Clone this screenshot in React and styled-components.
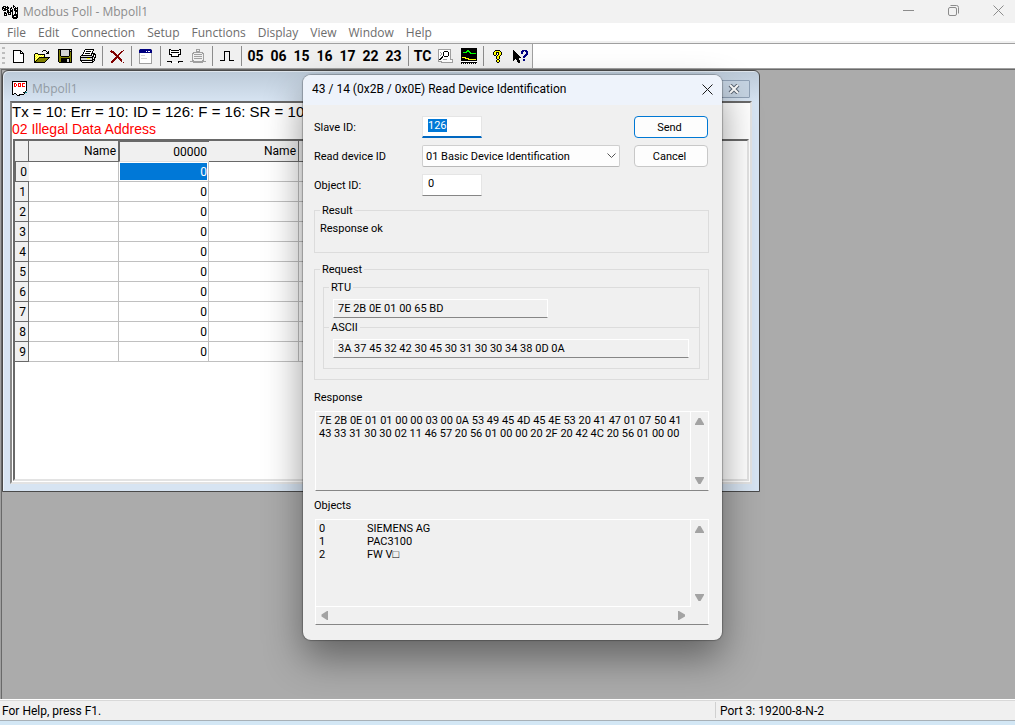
import React, { useEffect, useRef } from "react";
import styled, { createGlobalStyle } from "styled-components";

const uiFont = `"Open Sans", "Noto Sans", sans-serif`;
const dialogFont = `Roboto, "Noto Sans", sans-serif`;

const GlobalStyle = createGlobalStyle`
  * {
    box-sizing: border-box;
  }
  body {
    margin: 0;
    font-family: ${uiFont};
    font-size: 12px;
    color: #000;
    overflow: hidden;
  }
  button,
  input,
  select,
  textarea {
    font: inherit;
    color: inherit;
    margin: 0;
    border-radius: 0;
    outline: none;
  }
`;

/* ---------- pixel icons ---------- */

const palette = {
  k: "#000000",
  w: "#ffffff",
  y: "#ffff00",
  c: "#ffff9c",
  o: "#808000",
  r: "#800000",
  R: "#ff0000",
  n: "#000080",
  g: "#a0a0a0",
  d: "#707070",
  l: "#d4d4d4",
  G: "#00ff00",
  t: "#008080",
};

const icons = {
  app: [
    "...........k....",
    ".kkk.k.....kk...",
    "kkwkkkk..k.kwk.k",
    "kkkkwkk.kk..kkkk",
    "kwkkkk..kwk.kk.k",
    ".kkk.kk.kkk.kkkk",
    ".....kk.kkk..kkk",
    "..kk.kkkk.k..k.k",
    "..kkk.kwk.k..k.k",
    "..kwk.kkk.k.kkkk",
    "..kkk.....kkkkkk",
    "..........kkwwkk",
    "..........kkkkkk",
    "...........kkkk.",
  ],
  doc: [
    "kkkkkkkkkkkkkkk",
    "kwwwwwwwwwwwwwk",
    "kwRRwwRRRwRRRwk",
    "kwRwRwRwRwRwwwk",
    "kwRwRwRwRwRwwwk",
    "kwRRwwRRRwRRRwk",
    "kwwwwwwwwwwwwwk",
    "kwwwwwwwwwwwwwk",
    "kwwwwwwwwwwwwwk",
    "kwwwwwwwwwwwwwk",
    "kwwwwwwwwwwwwk.",
    "kwwwwwwwwwwkktt",
    "kwkkwwwwwwwwk..",
    "kk..kwwkkkkk...",
    ".....kkk.......",
  ],
  new: [
    "kkkkkkkk...",
    "kwwwwwwkk..",
    "kwwwwwwkwk.",
    "kwwwwwwkkkk",
    "kwwwwwwwwwk",
    "kwwwwwwwwwk",
    "kwwwwwwwwwk",
    "kwwwwwwwwwk",
    "kwwwwwwwwwk",
    "kwwwwwwwwwk",
    "kwwwwwwwwwk",
    "kwwwwwwwwwk",
    "kkkkkkkkkkk",
  ],
  open: [
    ".........kkk....",
    "........k...k.k.",
    ".............kk.",
    ".kkk........kkk.",
    "kycykkkkkkk.....",
    "kcycycycyck.....",
    "kycycycycyk.....",
    "kcycykkkkkkkkkkk",
    "kycykoooooooook.",
    "kcykoooooooook..",
    "kykoooooooook...",
    "kkoooooooook....",
    "kkkkkkkkkkk.....",
  ],
  save: [
    "kkkkkkkkkkkkkk",
    "kokllllllllklk",
    "kokllllllllkkk",
    "kokllllllllkok",
    "kokllllllllkok",
    "kokllllllllkok",
    "kokllllllllkok",
    "kookkkkkkkkook",
    "kooooooooooook",
    "kookkkkkkkkkok",
    "kookkkkkkllkok",
    "kookkkkkkllkok",
    "kookkkkkkllkok",
    ".kkkkkkkkkkkkk",
  ],
  print: [
    ".....kkkkkkkkk..",
    "....kwwwwwwwwk..",
    "....kwkkkkkwk...",
    "...kwwwwwwwwk...",
    "...kwkkkkkwkkkk.",
    "..kwwwwwwwwk.kkk",
    ".kkkkkkkkkkk.kwk",
    "klllllllllllkkwk",
    "kkkkkkkkkkkkklkk",
    "kllllllyyyllkwk.",
    "klllllllllllkkk.",
    "kkkkkkkkkkkkklk.",
    ".kwwwwwwwwwwkk..",
    "..kkkkkkkkkkk...",
  ],
  remove: [
    ".r...........r",
    "rrrr.......rr.",
    ".rrrr.....rr..",
    "...rrr...rr...",
    "....rrr.rr....",
    ".....rrrr.....",
    "......rrr.....",
    ".....rrrrr....",
    "....rrr.rrr...",
    "...rrr...rrr..",
    "..rrr.....rr..",
    ".rrr.......r..",
    ".rr..........r",
  ],
  window: [
    "gnnnnnnnnnnng",
    "nnnnnnnnnnnnn",
    "nnnnnnnwnwwnn",
    "nnnnnnnnnnnnn",
    "gwwwwwwwwwwwg",
    "gwwwwwwwwwwwg",
    "gwllllwwwwwwg",
    "gwwwwwwwwwwwg",
    "gwwwwwwwwwwwg",
    "gwllllllwwwwg",
    "gwwwwwwwwwwwg",
    "gwwwwwwwwwwwg",
    "gwwwwwwwwwwwg",
    "gwwwwwwwwwwwg",
    "ggggggggggggg",
  ],
  read: [
    "..kk........kk..",
    "..kwkkkkkkkkwk..",
    "..kwwwwwwwwwwk..",
    "..kwkkkkkkkkwk..",
    "..kwwwwwwwwwwk..",
    "..kkkwwwwwwkkk..",
    "....kwwwwwwk....",
    "....kkkkkkkk....",
    "................",
    "................",
    "................",
    "................",
    "kkkkk......kkkkk",
    "....kwwwwwwk....",
  ],
  write: [
    "......gggg......",
    "......g..g......",
    "......gggg......",
    "...gggggggggg...",
    "..gg........gg..",
    "..g.gggggggg.g..",
    "..g..........g..",
    "..g.gggggggg.g..",
    "..g..........g..",
    "..g.gggggggg.g..",
    "..g..........g..",
    "..gg........gg..",
    "gggggggggggggggg",
    "...gggggggggg...",
  ],
  log: [
    "ggggggggggggg..",
    "gwwwwwwwwwwwg..",
    "gwwwwwkkkkwwg..",
    "gwgwwkwwwwkwg..",
    "gwwgwkwwwwkwg..",
    "gwwgwkwwwwkwg..",
    "gwgwwkwwwwkwg..",
    "gwwwkwkkkkwwg..",
    "gwwkkwwwwwwwg..",
    "gwkkwwwwwwwwg..",
    "gkkwwggggwwwggg",
    "gwwwwwwwwwwwwwg",
    "ggggwwwwwwwwwwg",
    "...gggggggggggg",
  ],
  chart: [
    "kkkkkkkkkkkkkkkk",
    "kkkkkkkkkkkkkkkk",
    "kkkkkkGGkkkkkkkk",
    "kkkkkGGGGkkkkkkk",
    "kkGGGGkkGGkkkkkk",
    "kkkkkkkkkGGGGGGk",
    "kkkkkkkkkkkkkkkk",
    "kkkkkkkkkkkkkkkk",
    "kkkkkkkkkkkkkkkk",
    "kyyyykkkkkkkkkkk",
    "kkkkyyyykkkkkkkk",
    "kkkkkkkyyyyyyyyk",
    "kkkkkkkkkkkkkkkk",
    "wwwwwwwwwwwwwwww",
    "kkkkkkkkkkkkkkkk",
    "kwkwkwkwkwkwkwkw",
  ],
  help: [
    "..kkkkk..",
    ".kyyyyyk.",
    "kyykkkyyk",
    "kyyk.kyyk",
    "kyyk.kyyk",
    ".kk.kyyk.",
    "...kyyk..",
    "...kyyk..",
    "...kyyk..",
    "....kk...",
    "...kyyk..",
    "...kyyk..",
    "....kk...",
  ],
  context: [
    "k........nnnnn..",
    "kk......nnn.nnn.",
    "kkk.....nn...nn.",
    "kkkk....nn...nn.",
    "kkkkk.......nnn.",
    "kkkkkk.....nnn..",
    "kkkkkkk...nnn...",
    "kkkkkkkk..nn....",
    "kkkkkk..........",
    "kk.kkk....nn....",
    "k...kkk...nn....",
    "....kkk.........",
    ".....kk.........",
  ],
};

const PixelIcon = ({ name }) => {
  const rows = icons[name];
  const width = rows[0].length;

  return (
    <svg
      width={width}
      height={rows.length}
      viewBox={`0 0 ${width} ${rows.length}`}
      shapeRendering="crispEdges"
      aria-hidden="true"
    >
      {rows.map((row, y) =>
        row
          .split("")
          .map((c, x) =>
            palette[c] ? (
              <rect
                key={`${x}-${y}`}
                x={x}
                y={y}
                width="1"
                height="1"
                fill={palette[c]}
              />
            ) : null
          )
      )}
    </svg>
  );
};

/* ---------- main window ---------- */

const Page = styled.div`
  display: flex;
  flex-direction: column;
  height: 100vh;
  position: relative;
  background: #f0f0f0;
`;

const TitleBar = styled.header`
  display: flex;
  align-items: center;
  height: 23px;
  padding: 0 11px 0 2px;
  gap: 5px;
  background: #f2f2f2;
  color: #8c8c8c;
`;

const AppTitle = styled.h1`
  flex: 1;
  margin: 0;
  font-size: 12px;
  font-weight: normal;
`;

const WindowControls = styled.div`
  display: flex;
  gap: 34px;
  padding-bottom: 2px;
`;

const GlyphButton = styled.button`
  display: flex;
  padding: 0;
  border: 0;
  background: none;
`;

const MenuBar = styled.nav`
  display: flex;
  align-items: center;
  gap: 12px;
  height: 18px;
  padding: 1px 7px 0;
  background: #fff;

  a {
    color: #6d6d6d;
    text-decoration: none;
  }
`;

const ToolbarRow = styled.div`
  display: flex;
  height: 27px;
  background: #fff;
  border-top: 2px solid #f0f0f0;
`;

const Toolbar = styled.div`
  display: flex;
  align-items: center;
  background: #f0f0f0;
  border-top: 1px solid #a0a0a0;
  border-right: 1px solid #a0a0a0;
`;

const ToolbarRest = styled.div`
  flex: 1;
  border-top: 1px solid #a0a0a0;
`;

const Grip = styled.span`
  width: 3px;
  height: 19px;
  margin: 0 2px;
  background: repeating-linear-gradient(#bdbdbd 0 2px, #f0f0f0 2px 5px);
`;

const ToolButton = styled.button`
  display: flex;
  align-items: center;
  justify-content: center;
  width: 23px;
  height: 22px;
  padding: 0;
  border: 0;
  background: none;
  font-family: ${dialogFont};
  font-size: 14px;
  font-weight: bold;
`;

const Separator = styled.span`
  width: 1px;
  height: 20px;
  margin: 0 2px 0 3px;
  background: #8c8c8c;
`;

const Workspace = styled.main`
  flex: 1;
  position: relative;
  overflow: hidden;
  background: #ababab;
  border-top: 1px solid #a0a0a0;
  border-left: 1px solid #a0a0a0;
  box-shadow: inset 1px 1px #696969;
`;

const StatusBar = styled.footer`
  display: flex;
  align-items: center;
  height: 22px;
  border-top: 1px solid #fff;
  border-bottom: 1px solid #a8b0b6;
  box-shadow: inset 0 1px #d9d9d9;
  font-family: ${dialogFont};
`;

const StatusText = styled.span`
  flex: 1;
  padding: 2px 0 0 2px;
`;

const PortText = styled.span`
  width: 300px;
  padding: 2px 0 0 4px;
  border-left: 1px solid #d0d0d0;
`;

const DesktopEdge = styled.div`
  height: 4px;
  background: #d3e7f5;
`;

/* ---------- poll window ---------- */

const PollWindow = styled.section`
  position: absolute;
  left: 1px;
  top: 1px;
  width: 758px;
  height: 422px;
  display: flex;
  flex-direction: column;
  padding: 0 7px 7px;
  border: 1px solid #4a4a4a;
  border-radius: 6px 6px 0 0;
  background: linear-gradient(#bccad8, #d7e4f2 31px);
  box-shadow: inset 1px 1px rgba(255, 255, 255, 0.5);
`;

const PollTitle = styled.div`
  display: flex;
  align-items: center;
  gap: 5px;
  height: 30px;
  padding: 5px 2px 0;
  color: #929ba4;
`;

const PollName = styled.h2`
  flex: 1;
  margin: 0;
  font-size: 12px;
  font-weight: normal;
`;

const PollClose = styled.button`
  display: flex;
  align-items: center;
  justify-content: center;
  width: 32px;
  height: 18px;
  padding: 0;
  border: 1px solid #8fa0b5;
  border-radius: 1px;
  background: #c5d3e2;
`;

const Client = styled.div`
  flex: 1;
  display: flex;
  flex-direction: column;
  padding: 0 1px 1px;
  min-height: 0;
  border: 2px solid;
  border-color: #696969 #e3e3e3 #e3e3e3 #8a8a8a;
  background: #fff;
`;

const PollStatus = styled.p`
  margin: 0 0 0 -1px;
  height: 36px;
  font-family: "Liberation Sans", Arial, sans-serif;
  font-size: 15px;
  line-height: 17px;
  white-space: nowrap;
`;

const PollError = styled.span`
  display: block;
  font-size: 14px;
  line-height: 18px;
  color: #f00;
`;

const GridFrame = styled.div`
  flex: 1;
  border: 2px solid;
  border-color: #696969 #e3e3e3 #e3e3e3 #696969;
`;

const Grid = styled.table`
  table-layout: fixed;
  width: 374px;
  border-collapse: separate;
  border-spacing: 0;
  text-align: right;
  font-family: ${dialogFont};
`;

const HeadCell = styled.th`
  width: ${(props) => (props.$narrow ? "14px" : "90px")};
  height: 21px;
  padding: 0 2px 0 0;
  font-weight: normal;
  line-height: 18px;
  background: #f0f0f0;
  border: solid #696969;
  border-width: ${(props) => (props.$current ? "1px 0 1px 1px" : "0 1px 1px 0")};
  border-bottom-color: ${(props) => (props.$current ? "#e0e0e0" : "#696969")};
`;

const RowCell = styled.th`
  height: 20px;
  padding: 1px 2px 0 0;
  font-weight: normal;
  line-height: 18px;
  background: #f0f0f0;
  border: solid #696969;
  border-width: ${(props) => (props.$current ? "0 0 1px 1px" : "0 1px 1px 0")};
`;

const Cell = styled.td`
  height: 20px;
  padding: 1px;
  border: solid #c0c0c0;
  border-width: 0 1px 1px 0;
`;

const CellValue = styled.div`
  height: 17px;
  line-height: 18px;
  background: ${(props) => (props.$current ? "#0078d7" : "#fff")};
  color: ${(props) => (props.$current ? "#fff" : "#000")};
`;

/* ---------- dialog ---------- */

const Dialog = styled.form`
  position: absolute;
  left: 303px;
  top: 75px;
  width: 419px;
  border-radius: 8px;
  background: #f0f0f0;
  box-shadow: 0 0 1px 1px rgba(0, 0, 0, 0.25), 0 18px 38px rgba(0, 0, 0, 0.42);
  font-family: ${dialogFont};
  font-size: 11px;
  line-height: 13px;
`;

const DialogTitle = styled.div`
  display: flex;
  align-items: center;
  justify-content: space-between;
  height: 30px;
  padding: 0 9px 2px;
  border-radius: 8px 8px 0 0;
  background: #eef3fb;

  h2 {
    margin: 0;
    font-size: 12px;
    font-weight: normal;
  }
`;

const DialogBody = styled.div`
  display: flex;
  flex-direction: column;
  padding: 11px 13px 15px 11px;
`;

const Settings = styled.div`
  display: flex;
  justify-content: space-between;
`;

const Fields = styled.div`
  display: grid;
  grid-template-columns: 108px 198px;
  row-gap: 7px;
  align-items: center;
`;

const Actions = styled.div`
  display: flex;
  flex-direction: column;
  gap: 7px;
  padding-right: 1px;
`;

const DialogButton = styled.button`
  width: 74px;
  height: 22px;
  padding: 0 3px 0 0;
  border: 1px solid ${(props) => (props.$primary ? "#0078d4" : "#c8c8c8")};
  border-radius: 4px;
  background: #fdfdfd;
`;

const NumberInput = styled.input`
  width: 60px;
  height: 22px;
  padding: 0 5px 3px;
  border: 1px solid #e5e5e5;
  border-bottom: 1px solid #868686;
  background: #fff;

  &:focus {
    border-bottom: 2px solid #0067c0;
    padding-bottom: 2px;
  }

  &::selection {
    background: #0078d7;
    color: #fff;
  }
`;

const SelectWrap = styled.div`
  position: relative;

  svg {
    position: absolute;
    right: 4px;
    top: 8px;
    pointer-events: none;
  }
`;

const Select = styled.select`
  display: block;
  appearance: none;
  width: 100%;
  height: 22px;
  padding: 1px 3px 0;
  border: 1px solid #cfcfcf;
  border-bottom-color: #b8b8b8;
  border-radius: 2px;
  background: #fdfdfd;
`;

const Sections = styled.div`
  display: flex;
  flex-direction: column;
  padding-top: 8px;
  gap: 10px;
`;

/* $inset is the side padding, the legend always starts 6px from the frame */
const Group = styled.fieldset`
  min-width: 0;
  margin: 0;
  padding: 5px ${(props) => props.$inset}px 10px;
  border: 1px solid #dcdcdc;

  legend {
    margin-left: ${(props) => 5 - props.$inset}px;
    padding: 0 2px;
  }
`;

/* the frame below supplies the bottom line */
const OpenGroup = styled(Group)`
  margin-bottom: -7px;
  border-bottom: 0;
`;

const ResultText = styled.output`
  display: block;
  height: 20px;
`;

const CodeInput = styled.input`
  display: block;
  width: ${(props) => props.$width};
  height: 19px;
  padding: 0 4px;
  border: 1px solid #fff;
  border-bottom-color: #868686;
  background: #f0f0f0;
`;

const Areas = styled.div`
  display: flex;
  flex-direction: column;
  gap: 7px;
`;

const AreaLabel = styled.label`
  display: block;
  padding: 1px 0 7px;
`;

const AreaFrame = styled.div`
  display: grid;
  grid-template-columns: 1fr 17px;
  border: 1px solid #fff;
  border-bottom-color: #868686;
  margin-left: 1px;
`;

const Area = styled.textarea`
  display: block;
  width: 100%;
  height: ${(props) => props.$height};
  padding: 2px 3px;
  border: 0;
  border-right: 1px solid #fff;
  ${(props) => props.$divided && "border-bottom: 1px solid #fff;"}
  background: #f0f0f0;
  resize: none;
  overflow: hidden;
  white-space: pre;
  tab-size: 48px;
`;

const ScrollBar = styled.div`
  display: flex;
  flex-direction: ${(props) => (props.$horizontal ? "row" : "column")};
  align-items: center;
  justify-content: space-between;
  padding: ${(props) => (props.$horizontal ? "4px 5px" : "5px 4px")};
`;

const arrows = {
  up: "M3.5 1 H5.5 L9 7 V8 H0 V7 Z",
  down: "M0 1 H9 V2 L5.5 8 H3.5 L0 2 Z",
  left: "M7 0 V9 H6 L0.5 5.5 V3.5 L6 0 Z",
  right: "M1 0 H2 L8 3.5 V5.5 L2 9 H1 Z",
};

const Arrow = ({ direction }) => (
  <svg width="9" height="9" viewBox="0 0 9 9" aria-hidden="true">
    <path d={arrows[direction]} fill="#a3a3a3" />
  </svg>
);

const Cross = ({ color }) => (
  <svg width="11" height="11" viewBox="0 0 11 11" aria-hidden="true">
    <path d="M0.5 0.5 L10.5 10.5 M10.5 0.5 L0.5 10.5" stroke={color} />
  </svg>
);

const menus = [
  "File",
  "Edit",
  "Connection",
  "Setup",
  "Functions",
  "Display",
  "View",
  "Window",
  "Help",
];

const functionCodes = ["05", "06", "15", "16", "17", "22", "23"];

const rows = [0, 1, 2, 3, 4, 5, 6, 7, 8, 9];

const requestRtu = "7E 2B 0E 01 00 65 BD";
const requestAscii = "3A 37 45 32 42 30 45 30 31 30 30 34 38 0D 0A";
const response = `7E 2B 0E 01 01 00 00 03 00 0A 53 49 45 4D 45 4E 53 20 41 47 01 07 50 41
43 33 31 30 30 02 11 46 57 20 56 01 00 00 20 2F 20 42 4C 20 56 01 00 00`;
const objects = "0\tSIEMENS AG\n1\tPAC3100\n2\tFW V\u25a1";

const IconButton = ({ name, label }) => (
  <ToolButton type="button" aria-label={label}>
    <PixelIcon name={name} />
  </ToolButton>
);

const MainToolbar = () => (
  <ToolbarRow>
    <Toolbar role="toolbar">
      <Grip />
      <IconButton name="new" label="New" />
      <IconButton name="open" label="Open" />
      <IconButton name="save" label="Save" />
      <IconButton name="print" label="Print" />
      <Separator />
      <IconButton name="remove" label="Disconnect" />
      <Separator />
      <IconButton name="window" label="Read/write definition" />
      <Separator />
      <IconButton name="read" label="Poll" />
      <IconButton name="write" label="Write" />
      <Separator />
      <ToolButton type="button" aria-label="Pulse">
        <svg width="14" height="12" viewBox="0 0 14 12" aria-hidden="true">
          <path
            d="M0 10.5 H4.5 V1 H9.5 V10.5 H14"
            fill="none"
            stroke="#000"
            shapeRendering="crispEdges"
          />
        </svg>
      </ToolButton>
      <Separator />
      {functionCodes.map((code) => (
        <ToolButton type="button" key={code}>
          {code}
        </ToolButton>
      ))}
      <Separator />
      <ToolButton type="button">TC</ToolButton>
      <IconButton name="log" label="Traffic" />
      <IconButton name="chart" label="Chart" />
      <Separator />
      <IconButton name="help" label="About" />
      <IconButton name="context" label="Context help" />
    </Toolbar>
    <ToolbarRest />
  </ToolbarRow>
);

const Poll = () => (
  <PollWindow>
    <PollTitle>
      <PixelIcon name="doc" />
      <PollName>Mbpoll1</PollName>
      <PollClose type="button" aria-label="Close Mbpoll1">
        <svg width="12" height="10" viewBox="0 0 12 10" aria-hidden="true">
          <path d="M2 1 L10 9 M10 1 L2 9" stroke="#5b6675" strokeWidth="4" />
          <path d="M2 1 L10 9 M10 1 L2 9" stroke="#fff" strokeWidth="2" />
        </svg>
      </PollClose>
    </PollTitle>
    <Client>
      <PollStatus>
        Tx = 10: Err = 10: ID = 126: F = 16: SR = 1000ms
        <PollError>02 Illegal Data Address</PollError>
      </PollStatus>
      <GridFrame>
        <Grid>
          <thead>
            <tr>
              <HeadCell $narrow />
              <HeadCell>Name</HeadCell>
              <HeadCell $current>00000</HeadCell>
              <HeadCell>Name</HeadCell>
              <HeadCell />
            </tr>
          </thead>
          <tbody>
            {rows.map((row) => (
              <tr key={row}>
                <RowCell $current={row === 0}>{row}</RowCell>
                <Cell />
                <Cell>
                  <CellValue $current={row === 0}>0</CellValue>
                </Cell>
                <Cell />
                <Cell />
              </tr>
            ))}
          </tbody>
        </Grid>
      </GridFrame>
    </Client>
  </PollWindow>
);

const IdentificationDialog = () => {
  const slaveRef = useRef(null);

  useEffect(() => {
    slaveRef.current.focus();
    slaveRef.current.select();
  }, []);

  return (
    <Dialog onSubmit={(e) => e.preventDefault()}>
      <DialogTitle>
        <h2>43 / 14 (0x2B / 0x0E) Read Device Identification</h2>
        <GlyphButton type="button" aria-label="Close">
          <Cross color="#1a1a1a" />
        </GlyphButton>
      </DialogTitle>
      <DialogBody>
        <Settings>
          <Fields>
            <label htmlFor="slave">Slave ID:</label>
            <NumberInput id="slave" ref={slaveRef} defaultValue="126" />
            <label htmlFor="device">Read device ID</label>
            <SelectWrap>
              <Select id="device">
                <option>01 Basic Device Identification</option>
              </Select>
              <svg width="9" height="6" viewBox="0 0 9 6" aria-hidden="true">
                <path
                  d="M0.5 0.5 L4.5 4.5 L8.5 0.5"
                  fill="none"
                  stroke="#555"
                />
              </svg>
            </SelectWrap>
            <label htmlFor="object">Object ID:</label>
            <NumberInput id="object" defaultValue="0" />
          </Fields>
          <Actions>
            <DialogButton type="submit" $primary>
              Send
            </DialogButton>
            <DialogButton type="button">Cancel</DialogButton>
          </Actions>
        </Settings>
        <Sections>
          <Group $inset={5}>
            <legend>Result</legend>
            <ResultText>Response ok</ResultText>
          </Group>
          <Group $inset={8}>
            <legend>Request</legend>
            <OpenGroup $inset={9}>
              <legend>RTU</legend>
              <CodeInput
                $width="215px"
                aria-label="RTU"
                readOnly
                value={requestRtu}
              />
            </OpenGroup>
            <Group $inset={9}>
              <legend>ASCII</legend>
              <CodeInput
                $width="356px"
                aria-label="ASCII"
                readOnly
                value={requestAscii}
              />
            </Group>
          </Group>
          <Areas>
            <div>
              <AreaLabel htmlFor="response">Response</AreaLabel>
              <AreaFrame>
                <Area
                  id="response"
                  $height="78px"
                  readOnly
                  value={response}
                />
                <ScrollBar>
                  <Arrow direction="up" />
                  <Arrow direction="down" />
                </ScrollBar>
              </AreaFrame>
            </div>
            <div>
              <AreaLabel htmlFor="objects">Objects</AreaLabel>
              <AreaFrame>
                <Area
                  id="objects"
                  $height="87px"
                  $divided
                  readOnly
                  value={objects}
                />
                <ScrollBar>
                  <Arrow direction="up" />
                  <Arrow direction="down" />
                </ScrollBar>
                <ScrollBar $horizontal>
                  <Arrow direction="left" />
                  <Arrow direction="right" />
                </ScrollBar>
              </AreaFrame>
            </div>
          </Areas>
        </Sections>
      </DialogBody>
    </Dialog>
  );
};

const App = () => (
  <>
    <GlobalStyle />
    <Page>
      <TitleBar>
        <PixelIcon name="app" />
        <AppTitle>Modbus Poll - Mbpoll1</AppTitle>
        <WindowControls>
          <GlyphButton type="button" aria-label="Minimize">
            <svg width="11" height="11" viewBox="0 0 11 11">
              <path d="M0 5.5 H11" stroke="#8c8c8c" />
            </svg>
          </GlyphButton>
          <GlyphButton type="button" aria-label="Restore">
            <svg width="11" height="11" viewBox="0 0 11 11" fill="none">
              <rect
                x="0.5"
                y="2.5"
                width="8"
                height="8"
                rx="1.5"
                stroke="#8c8c8c"
              />
              <path d="M2.5 0.5 H8.5 Q10.5 0.5 10.5 2.5 V8.5" stroke="#8c8c8c" />
            </svg>
          </GlyphButton>
          <GlyphButton type="button" aria-label="Close window">
            <Cross color="#8c8c8c" />
          </GlyphButton>
        </WindowControls>
      </TitleBar>
      <MenuBar>
        {menus.map((menu) => (
          <a href="#" key={menu}>
            {menu}
          </a>
        ))}
      </MenuBar>
      <MainToolbar />
      <Workspace>
        <Poll />
      </Workspace>
      <StatusBar>
        <StatusText>For Help, press F1.</StatusText>
        <PortText>Port 3: 19200-8-N-2</PortText>
      </StatusBar>
      <DesktopEdge />
      <IdentificationDialog />
    </Page>
  </>
);

export default App;
